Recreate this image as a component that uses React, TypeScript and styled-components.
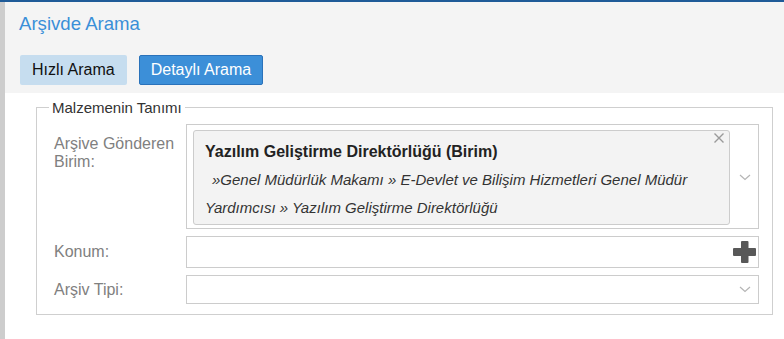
import React from 'react';
import styled, { createGlobalStyle } from 'styled-components';

const GlobalStyle = createGlobalStyle`
    html, body {
        margin: 0;
        padding: 0;
        background: #ffffff;
        font-family: "Liberation Sans", Arial, sans-serif;
    }
    * {
        box-sizing: border-box;
    }
`;

const Page = styled.div`
    display: flex;
    flex-direction: column;
    min-height: 100vh;
    border-top: 2px solid #1f5b98;
`;

const Body = styled.div`
    flex: 1;
    display: flex;
`;

const SideStrip = styled.div`
    width: 5px;
    background: #cdcdcd;
`;

const Main = styled.div`
    flex: 1;
    display: flex;
    flex-direction: column;
`;

const Header = styled.div`
    background: #f4f4f4;
    padding: 11px 0 8px 14px;
`;

const Title = styled.h1`
    margin: 0;
    font-size: 18.6px;
    line-height: 22px;
    font-weight: normal;
    color: #3a8fd8;
`;

const Tabs = styled.div`
    display: flex;
    gap: 12px;
    margin-top: 20px;
    padding-left: 1px;
`;

const TabButton = styled.button<{ $active?: boolean }>`
    height: 30px;
    padding: 0 11px;
    border-radius: 2px;
    border: 1px solid ${(p) => (p.$active ? '#2a72ba' : 'transparent')};
    background: ${(p) => (p.$active ? '#3c8fd8' : '#c6ddef')};
    color: ${(p) => (p.$active ? '#ffffff' : '#111111')};
    font-family: inherit;
    font-size: 16px;
    line-height: 28px;
    cursor: pointer;
`;

const Panel = styled.div`
    flex: 1;
    background: #ffffff;
    padding: 6px 11px 0 31px;
`;

const FieldGroup = styled.fieldset`
    margin: 0;
    padding: 8px 13px 10px 12px;
    border: 1px solid #cfcfcf;
    min-width: 0;
`;

const Legend = styled.legend`
    padding: 0 3px;
    font-size: 15px;
    line-height: 17px;
    color: #333333;
`;

const Rows = styled.div`
    display: grid;
    grid-template-columns: 137px 1fr;
    row-gap: 7px;
`;

const Label = styled.label<{ $top?: boolean }>`
    align-self: ${(p) => (p.$top ? 'start' : 'center')};
    padding: ${(p) => (p.$top ? '11px' : '0')} 8px 0 5px;
    font-size: 16px;
    line-height: 18px;
    color: #808080;
`;

const SelectBox = styled.div`
    display: flex;
    align-items: center;
    min-height: 105px;
    padding: 5px 0 3px 6px;
    border: 1px solid #cccccc;
    background: #ffffff;
`;

const Chip = styled.div`
    position: relative;
    flex: 1;
    align-self: stretch;
    padding: 7px 24px 0 11px;
    border: 1px solid #cccccc;
    border-radius: 3px;
    background: #f3f3f3;
`;

const ChipTitle = styled.div`
    font-size: 16px;
    line-height: 28px;
    font-weight: bold;
    color: #222222;
`;

const ChipPath = styled.div`
    font-size: 15px;
    line-height: 28px;
    font-style: italic;
    color: #333333;
    text-indent: 7px;
`;

const RemoveMark = styled.span`
    position: absolute;
    top: 1px;
    right: 4px;
    display: flex;
`;

const Arrow = styled.span`
    display: flex;
    width: 28px;
    justify-content: center;
    padding-left: 1px;
`;

const InputBox = styled.div<{ $height: number }>`
    display: flex;
    align-items: center;
    justify-content: flex-end;
    height: ${(p) => p.$height}px;
    border: 1px solid #cccccc;
    background: #ffffff;
`;

const PlusWrap = styled.span`
    display: flex;
    padding-right: 2px;
`;

const Chevron = () => (
    <svg width='12' height='7' viewBox='0 0 12 7'>
        <path d='M1 1 L6 5.5 L11 1' fill='none' stroke='#b5b5b5' strokeWidth='1.2' />
    </svg>
);

const CloseIcon = () => (
    <svg width='12' height='12' viewBox='0 0 12 12'>
        <path d='M1.5 1.5 L10.5 10.5 M10.5 1.5 L1.5 10.5' stroke='#9a9a9a' strokeWidth='1.4' />
    </svg>
);

const PlusIcon = () => (
    <svg width='23' height='22' viewBox='0 0 23 22'>
        <rect x='8' y='0' width='7.5' height='22' rx='1' fill='#585858' />
        <rect x='0' y='7' width='23' height='8' rx='1' fill='#585858' />
    </svg>
);

const App: React.FC = () => {
    return (
        <>
            <GlobalStyle />
            <Page>
                <Body>
                    <SideStrip />
                    <Main>
                        <Header>
                            <Title>Arşivde Arama</Title>
                            <Tabs>
                                <TabButton>Hızlı Arama</TabButton>
                                <TabButton $active>Detaylı Arama</TabButton>
                            </Tabs>
                        </Header>
                        <Panel>
                            <FieldGroup>
                                <Legend>Malzemenin Tanımı</Legend>
                                <Rows>
                                    <Label $top>Arşive Gönderen Birim:</Label>
                                    <SelectBox>
                                        <Chip>
                                            <ChipTitle>Yazılım Geliştirme Direktörlüğü (Birim)</ChipTitle>
                                            <ChipPath>
                                                »Genel Müdürlük Makamı » E-Devlet ve Bilişim Hizmetleri Genel Müdür
                                                Yardımcısı » Yazılım Geliştirme Direktörlüğü
                                            </ChipPath>
                                            <RemoveMark>
                                                <CloseIcon />
                                            </RemoveMark>
                                        </Chip>
                                        <Arrow>
                                            <Chevron />
                                        </Arrow>
                                    </SelectBox>

                                    <Label>Konum:</Label>
                                    <InputBox $height={32}>
                                        <PlusWrap>
                                            <PlusIcon />
                                        </PlusWrap>
                                    </InputBox>

                                    <Label>Arşiv Tipi:</Label>
                                    <InputBox $height={29}>
                                        <Arrow>
                                            <Chevron />
                                        </Arrow>
                                    </InputBox>
                                </Rows>
                            </FieldGroup>
                        </Panel>
                    </Main>
                </Body>
            </Page>
        </>
    );
};

export default App;
